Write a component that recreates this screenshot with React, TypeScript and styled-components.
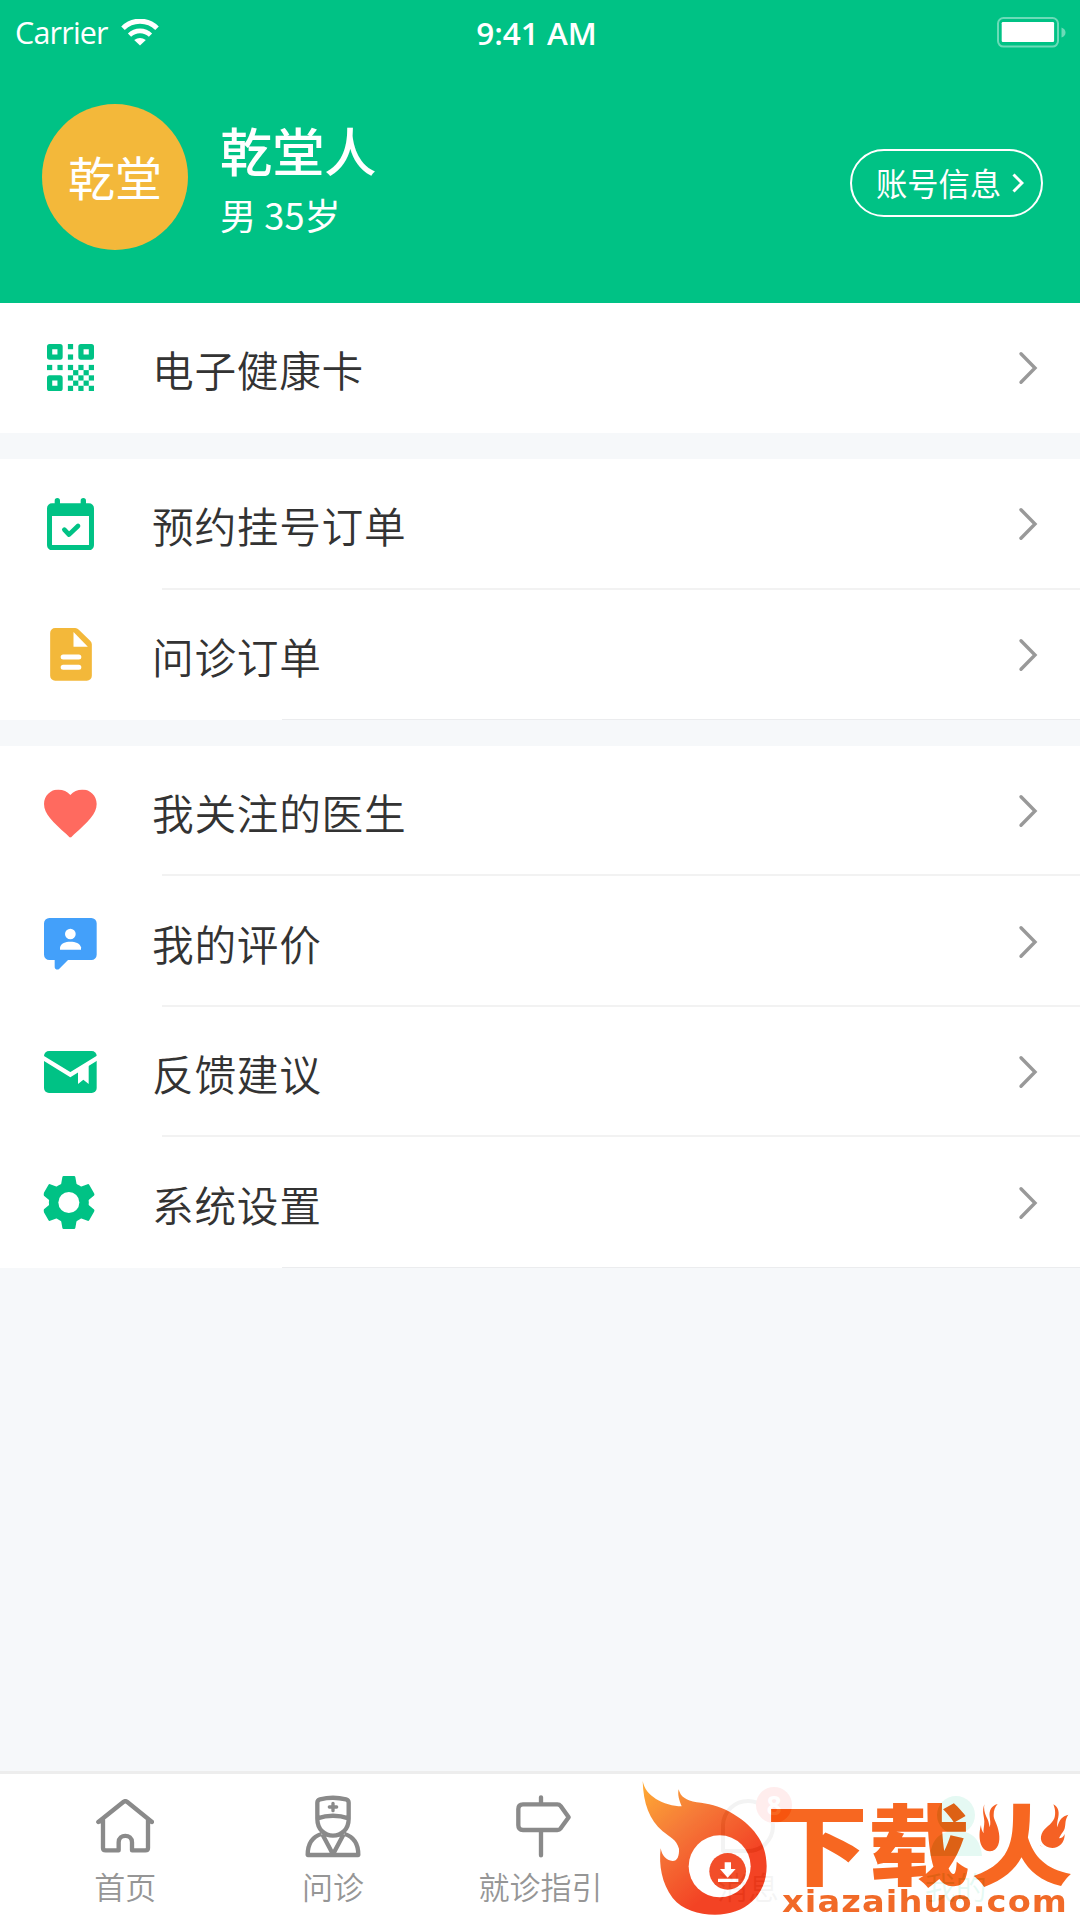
import React from "react";
import styled, { createGlobalStyle } from "styled-components";

const GREEN = "#00c285";
const AMBER = "#f3b83a";

const GlobalStyle = createGlobalStyle`
  *, *::before, *::after { box-sizing: border-box; }
  body { margin: 0; background: #f6f8fa; }
`;

const Screen = styled.div`
  display: flex;
  flex-direction: column;
  width: 1080px;
  height: 1920px;
  overflow: hidden;
  position: relative;
  background: #f6f8fa;
  color: #333;
  font-family: "Noto Sans CJK SC", "Noto Sans", sans-serif;
`;

const Header = styled.header`
  flex: none;
  height: 302.6px;
  background: ${GREEN};
  color: #fff;
`;

const StatusBar = styled.div`
  display: grid;
  grid-template-columns: 1fr auto 1fr;
  align-items: center;
  height: 64px;
  padding: 0 14px 0 15px;
  font-family: "Open Sans", "Noto Sans", sans-serif;
  font-size: 30.5px;
  line-height: 42px;
`;

const Carrier = styled.div`
  display: flex;
  align-items: center;
  gap: 13px;
  letter-spacing: -0.8px;
`;

const Clock = styled.div`
  font-weight: 600;
  font-size: 31.5px;
  padding-top: 1px;
  margin-left: -8px;
`;

const BatterySlot = styled.div`
  display: flex;
  justify-content: flex-end;
`;

const Profile = styled.section`
  display: flex;
  align-items: flex-start;
  padding: 40px 37px 0 42px;
`;

const Avatar = styled.div`
  display: flex;
  align-items: center;
  justify-content: center;
  width: 146px;
  height: 146px;
  padding-bottom: 4px;
  border-radius: 50%;
  background: ${AMBER};
  font-size: 47px;
`;

const Identity = styled.div`
  flex: 1;
  margin: 13px 0 0 32px;
`;

const Name = styled.div`
  font-size: 52.2px;
  font-weight: 500;
  line-height: 65px;
`;

const Detail = styled.div`
  font-size: 36.2px;
  line-height: 65px;
`;

const AccountButton = styled.button`
  display: flex;
  align-items: center;
  width: 193px;
  height: 68px;
  margin: 44.5px 0 0;
  padding: 0 0 0 24px;
  gap: 11px;
  border: 2.6px solid #fff;
  border-radius: 34px;
  background: transparent;
  color: #fff;
  font: inherit;
  font-size: 31.3px;
  line-height: 46px;
`;

const AccountLabel = styled.span`
  margin-top: 1px;
`;

const Menu = styled.main`
  display: flex;
  flex-direction: column;
  gap: 26.1px;
  flex: 1;
`;

const Group = styled.section`
  background: #fff;
`;

const Row = styled.div`
  display: flex;
  align-items: center;
  height: 130.43px;
  padding: 0 42px 0 42px;
  position: relative;
`;

const Divider = styled.i<{ $last: boolean }>`
  position: absolute;
  right: 0;
  bottom: 0;
  left: ${(p) => (p.$last ? 282 : 162)}px;
  height: ${(p) => (p.$last ? 1 : 2)}px;
  background: ${(p) => (p.$last ? "#ebecee" : "#f2f2f2")};
`;

const IconSlot = styled.span<{ $dx?: number; $dy?: number }>`
  display: flex;
  justify-content: center;
  width: 57px;
  margin-right: 53px;
  transform: translate(${(p) => p.$dx ?? 0}px, ${(p) => p.$dy ?? 0}px);
`;

const RowLabel = styled.span`
  flex: 1;
  padding-top: 2px;
  font-size: 41.7px;
  font-weight: 350;
  letter-spacing: 0.7px;
  line-height: 60px;
`;

const TabBar = styled.nav`
  flex: none;
  display: flex;
  height: 149px;
  padding: 0 20.5px 0 21.5px;
  border-top: 3px solid #ededed;
  background: #fff;
`;

const Tab = styled.div<{ $color: string }>`
  display: flex;
  flex-direction: column;
  align-items: center;
  flex: 1;
  padding-top: 15px;
  position: relative;
  color: ${(p) => p.$color};
`;

const TabIcon = styled.div`
  display: flex;
  align-items: center;
  justify-content: center;
  height: 74px;
`;

const TabLabel = styled.div<{ $active?: boolean }>`
  padding-top: 1px;
  font-size: 31px;
  font-weight: 350;
  line-height: 44px;
  color: ${(p) => (p.$active ? GREEN : "#969696")};
`;

const Badge = styled.span`
  position: absolute;
  top: 13px;
  left: 112px;
  width: 36px;
  height: 36px;
  border-radius: 50%;
  background: #ff4d4d;
  color: #fff;
  font: bold 26px/36px "Open Sans", sans-serif;
  text-align: center;
`;

const Stamp = styled.svg`
  position: absolute;
  left: 637px;
  top: 1774px;
  opacity: 0.9;
`;

const qrCells = [
  [4, 0], [4, 2], [0, 4], [2, 4], [4, 4], [6, 4], [8, 4],
  [5, 5], [7, 5], [4, 6], [6, 6], [8, 6], [5, 7], [7, 7], [4, 8], [6, 8], [8, 8],
];

const QrIcon = () => (
  <svg width="47" height="47" viewBox="0 0 9 9" fill={GREEN}>
    {[[0, 0], [6, 0], [0, 6]].map(([x, y]) => (
      <path
        key={`${x}${y}`}
        transform={`translate(${x} ${y})`}
        fillRule="evenodd"
        d="M.5 0h2a.5.5 0 0 1 .5.5v2a.5.5 0 0 1-.5.5h-2a.5.5 0 0 1-.5-.5v-2a.5.5 0 0 1 .5-.5zM1 1v1h1v-1z"
      />
    ))}
    {qrCells.map(([x, y]) => (
      <rect key={`c${x}${y}`} x={x} y={y} width="1" height="1" />
    ))}
  </svg>
);

const CalendarIcon = () => (
  <svg width="47" height="52.3" viewBox="141 594 141 157">
    <path fill={GREEN} fillRule="evenodd" d="M156 610h8v-8a8 8 0 0 1 16 0v8h62v-8a8 8 0 0 1 16 0v8h9a15 15 0 0 1 15 15v111a15 15 0 0 1-15 15H156a15 15 0 0 1-15-15V625a15 15 0 0 1 15-15zM156 648v87h111v-87z" />
    <path d="M193 689l14 15 27-26" fill="none" stroke={GREEN} strokeWidth="14" strokeLinecap="round" strokeLinejoin="round" />
  </svg>
);

const OrderIcon = () => (
  <svg width="42" height="52.7" viewBox="149 175 125 158">
    <path fill={AMBER} d="M164 175h60q6 0 11 5l34 33q5 5 5 11v94a15 15 0 0 1-15 15H164a15 15 0 0 1-15-15V190a15 15 0 0 1 15-15z" />
    <path fill="#fff" d="M219 187v44h43z" />
    <path d="M188 262h47M188 293h47" stroke="#fff" strokeWidth="15" strokeLinecap="round" />
  </svg>
);

const HeartIcon = () => (
  <svg width="52.7" height="48.3" viewBox="2 3 20 18.35" fill="#ff6a5f">
    <path d="M12 21.35q-.3 0-.6-.5l-.85-.82C5.4 15.36 2 12.28 2 8.5 2 5.42 4.42 3 7.5 3c1.74 0 3.41.81 4.5 2.09C13.09 3.81 14.76 3 16.5 3 19.58 3 22 5.42 22 8.5c0 3.78-3.4 6.86-8.55 11.54l-.85.81q-.3.5-.6.5z" />
  </svg>
);

const ReviewIcon = () => (
  <svg width="52.7" height="52" viewBox="132 144 158 156">
    <path fill="#43a0fa" d="M148 144h126a16 16 0 0 1 16 16v94a16 16 0 0 1-16 16h-70l-26 26q-6 5-12 0-2-2-2-6v-20h-16a16 16 0 0 1-16-16v-94a16 16 0 0 1 16-16z" />
    <circle cx="211" cy="192" r="16" fill="#fff" />
    <path fill="#fff" d="M180 239v-7c3-12 16-17 31-17s29 5 32 17v7z" />
  </svg>
);

const MailIcon = () => (
  <svg width="52.7" height="42" viewBox="132 543 158 126">
    <rect x="132" y="543" width="158" height="126" rx="15" fill={GREEN} />
    <path d="M128 563l83 51 83-51" fill="none" stroke="#fff" strokeWidth="13" />
    <path fill="#fff" d="M234 595l32-20v67l-16-13-16 13z" />
  </svg>
);

const GearIcon = () => (
  <svg width="50.3" height="53" viewBox="132 918 151 159">
    <g fill={GREEN} stroke={GREEN} strokeWidth="8" strokeLinejoin="round">
      {[0, 60, 120].map((a) => (
        <path key={a} transform={`rotate(${a} 207.5 997.5)`} d="M192 922h31l5 28v95l-5 28h-31l-5-28v-95z" />
      ))}
      <circle cx="207.5" cy="997.5" r="56" />
    </g>
    <circle cx="207.5" cy="997.5" r="31.5" fill="#fff" />
  </svg>
);

const Chevron = () => (
  <svg width="20" height="34" viewBox="0 0 20 34" fill="none" stroke="#999" strokeWidth="3.4" strokeLinecap="round">
    <path d="M3 2.8L17 17 3 31.2" />
  </svg>
);

const HomeIcon = () => (
  <svg width="58" height="54" viewBox="288 119 174 162" fill="none" stroke="currentColor" strokeWidth="13" strokeLinejoin="round" strokeLinecap="round">
    <path d="M295 188l14-5v83q0 7 8 7h39v-24c0-26 40-26 40 0v24h40q8 0 8-7v-83l12 5-74-60q-6-5-12 0z" />
  </svg>
);

const DoctorIcon = () => (
  <svg width="56" height="63" viewBox="916 104 168 189" fill="none" stroke="currentColor" strokeWidth="13" strokeLinejoin="round">
    <path d="M953 175v-48q0-8 8-10c25-6 53-6 78 0q8 2 8 10v48c0 68-94 68-94 0zM953 174c30-10 64-10 94 0M965 221c-26 8-41 28-41 63h152c0-35-15-55-41-63M968 222l32 60 32-60" />
    <path d="M1000 129v22M989 140h22" strokeWidth="10" strokeLinecap="round" />
  </svg>
);

const SignIcon = () => (
  <svg width="55" height="63" viewBox="337 104 165 189" fill="none" stroke="currentColor" strokeWidth="13" strokeLinejoin="round" strokeLinecap="round" overflow="visible">
    <path d="M421 111v21M421 210v75M367 132h103q6 0 10 5l24 34-24 33q-4 5-10 5H367q-14 0-14-14v-49q0-14 14-14z" />
  </svg>
);

const ChatIcon = () => (
  <svg width="56" height="56" viewBox="0 0 56 56" fill="none" stroke="currentColor" strokeWidth="4" strokeLinejoin="round">
    <path d="M3 53V27a25 25 0 1 1 25 26z" />
  </svg>
);

const UserIcon = () => (
  <svg width="52" height="60" viewBox="0 0 52 60" fill="currentColor">
    <circle cx="26" cy="19" r="19" />
    <path d="M0 60c1-14 8-22 17-24h18c9 2 16 10 17 24z" />
  </svg>
);

const WifiIcon = () => (
  <svg width="38" height="27" viewBox="0 0 38 27" fill="none" stroke="#fff" strokeWidth="5">
    <path d="M2 9.2a24 24 0 0 1 34 0" />
    <path d="M8.5 16.2a15 15 0 0 1 21 0" strokeWidth="4.6" />
    <path d="M19 26.5l-5.8-5.4q5.8-4 11.6 0z" fill="#fff" stroke="none" />
  </svg>
);

const BatteryIcon = () => (
  <svg width="69" height="31" viewBox="0 0 69 31">
    <rect x="1" y="1" width="60" height="28.6" rx="5.5" fill="none" stroke="#fff" strokeOpacity="0.42" strokeWidth="2" />
    <rect x="4.7" y="5" width="52.4" height="20" rx="1.2" fill="#fff" />
    <path d="M64.5 10.5q4 1.5 4 5t-4 5z" fill="#fff" fillOpacity="0.42" />
  </svg>
);

const wordmark = {
  fontFamily: "'Noto Sans CJK SC', sans-serif",
  fontWeight: 900,
  fontSize: 88,
  fill: "#f75608",
  lengthAdjust: "spacingAndGlyphs" as const,
};

const SiteStamp = () => (
  <Stamp width="443" height="146" viewBox="637 1774 443 146">
    <defs>
      <linearGradient id="fire" x1="0.05" y1="0" x2="0.65" y2="0.75">
        <stop offset="0" stopColor="#ffa01e" />
        <stop offset="0.45" stopColor="#f46a22" />
        <stop offset="1" stopColor="#f22e0c" />
      </linearGradient>
      <clipPath id="trunk">
        <path d="M1009 1795H1036V1842L1080 1876V1895H960V1875L1009 1836Z" />
      </clipPath>
    </defs>
    <rect x="637" y="1774" width="440" height="144" fill="#fff" />
    <g transform="translate(630 1770) scale(0.33333)">
      <path fill="url(#fire)" d="M38 33C40 100 58 150 98 184C120 202 139 208 147 236C148 258 142 273 128 273C108 272 96 256 92 235C86 285 95 340 128 384C158 420 205 434 255 434C345 434 410 378 410 288C410 215 367 164 300 126C265 107 235 101 200 97C168 92 151 80 146 58C142 75 148 92 155 109C130 109 99 100 78 87C56 72 43 57 38 33Z" />
      <circle cx="269" cy="289" r="93" fill="#fff" />
      <circle cx="293" cy="304" r="55" fill="#f13a12" />
      <path fill="#fff" d="M284 277h19v20h14l-24 26-23-26h14zM264 326h61v10h-61z" />
    </g>
    <text {...wordmark} x="766" y="1878" textLength="204">下载</text>
    <text {...wordmark} x="971" y="1878" textLength="102" clipPath="url(#trunk)">火</text>
    <g transform="translate(855 1770) scale(0.33333)" fill="#f4500c">
      <path d="M388 103C380 125 388 140 388 155C388 170 384 178 386 190C381 182 378 175 378 165C370 190 370 243 405 244C430 243 436 215 432 190C428 160 415 150 416 135C416 120 420 110 428 102C408 108 402 122 404 140C405 150 408 160 404 172C402 160 400 150 394 140C388 128 386 115 388 103Z" />
      <path d="M595 103C612 112 614 130 608 150C606 160 606 165 607 172C612 150 622 138 640 134C630 148 632 160 630 170C628 185 618 190 612 205C620 205 626 200 629 192C630 218 612 234 592 234C565 232 552 212 560 192C568 172 590 165 598 145C603 130 600 115 595 103Z" />
    </g>
    <text x="782" y="1911.5" textLength="286" lengthAdjust="spacingAndGlyphs" letterSpacing="1" fontFamily="'DejaVu Sans', sans-serif" fontWeight="bold" fontSize="30" fill="#f05a10">xiazaihuo.com</text>
  </Stamp>
);

const groups = [
  [{ label: "电子健康卡", Icon: QrIcon }],
  [
    { label: "预约挂号订单", Icon: CalendarIcon },
    { label: "问诊订单", Icon: OrderIcon },
  ],
  [
    { label: "我关注的医生", Icon: HeartIcon, dy: 2.5 },
    { label: "我的评价", Icon: ReviewIcon, dy: 2 },
    { label: "反馈建议", Icon: MailIcon },
    { label: "系统设置", Icon: GearIcon, dx: -1.3 },
  ],
];

const tabs = [
  { label: "首页", Icon: HomeIcon },
  { label: "问诊", Icon: DoctorIcon },
  { label: "就诊指引", Icon: SignIcon },
  { label: "消息", Icon: ChatIcon, badge: "8" },
  { label: "我的", Icon: UserIcon, active: true },
];

export default function App() {
  return (
    <Screen>
      <GlobalStyle />
      <Header>
        <StatusBar>
          <Carrier>
            Carrier
            <WifiIcon />
          </Carrier>
          <Clock>9:41 AM</Clock>
          <BatterySlot>
            <BatteryIcon />
          </BatterySlot>
        </StatusBar>
        <Profile>
          <Avatar>乾堂</Avatar>
          <Identity>
            <Name>乾堂人</Name>
            <Detail>男 35岁</Detail>
          </Identity>
          <AccountButton>
            <AccountLabel>账号信息</AccountLabel>
            <svg width="12" height="20" viewBox="0 0 12 20" fill="none" stroke="#fff" strokeWidth="3">
              <path d="M1.5 1.5L10 10l-8.5 8.5" />
            </svg>
          </AccountButton>
        </Profile>
      </Header>
      <Menu>
        {groups.map((rows, g) => (
          <Group key={g}>
            {rows.map(({ label, Icon, dx, dy }: { label: string; Icon: React.FC; dx?: number; dy?: number }, i) => (
              <Row key={label}>
                <IconSlot $dx={dx} $dy={dy}>
                  <Icon />
                </IconSlot>
                <RowLabel>{label}</RowLabel>
                <Chevron />
                {rows.length > 1 && <Divider $last={i === rows.length - 1} />}
              </Row>
            ))}
          </Group>
        ))}
      </Menu>
      <TabBar>
        {tabs.map(({ label, Icon, active, badge }) => (
          <Tab key={label} $color={active ? GREEN : "#8a8a8a"}>
            <TabIcon>
              <Icon />
            </TabIcon>
            <TabLabel $active={active}>{label}</TabLabel>
            {badge && <Badge>{badge}</Badge>}
          </Tab>
        ))}
      </TabBar>
      <SiteStamp />
    </Screen>
  );
}
